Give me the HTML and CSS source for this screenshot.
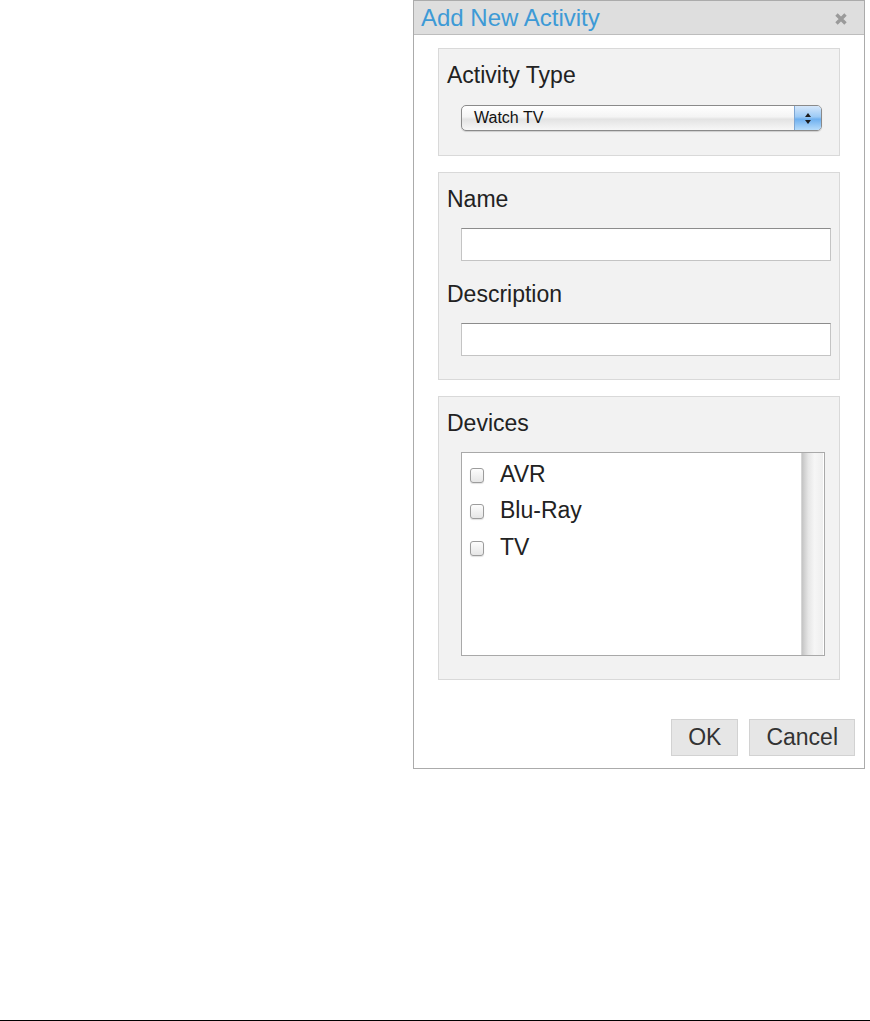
FILE: index.html
```html
<!DOCTYPE html>
<html lang="en">
<head>
    <meta charset="UTF-8">
    <meta name="viewport" content="width=device-width, initial-scale=1.0">
    <title>Add New Activity</title>
    <link rel="stylesheet" href="styles.css">
</head>
<body>
    <div class="dialog" role="dialog" aria-labelledby="dialog-title">
        <div class="dialog__titlebar">
            <span class="dialog__title" id="dialog-title">Add New Activity</span>
            <button class="dialog__close" aria-label="Close">
                <svg width="12" height="12" viewBox="0 0 12 12">
                    <path d="M1.5 1.5 L10.5 10.5 M10.5 1.5 L1.5 10.5" stroke="#9a9a9a" stroke-width="3.4" stroke-linecap="butt"/>
                </svg>
            </button>
        </div>

        <div class="dialog__body">
            <div class="group">
                <label class="group__label">Activity Type</label>
                <div class="select" role="combobox" aria-label="Activity Type">
                    <span class="select__value">Watch TV</span>
                    <span class="select__stepper">
                        <span class="arrow arrow--up"></span>
                        <span class="arrow arrow--down"></span>
                    </span>
                </div>
            </div>

            <div class="group">
                <label class="group__label" for="name">Name</label>
                <input class="field" id="name" type="text">
                <label class="group__label group__label--spaced" for="description">Description</label>
                <input class="field" id="description" type="text">
            </div>

            <div class="group">
                <label class="group__label">Devices</label>
                <div class="listbox">
                    <ul class="listbox__items">
                        <li><label class="device"><input class="check" type="checkbox"> AVR</label></li>
                        <li><label class="device"><input class="check" type="checkbox"> Blu-Ray</label></li>
                        <li><label class="device"><input class="check" type="checkbox"> TV</label></li>
                    </ul>
                    <div class="listbox__scroll"></div>
                </div>
            </div>
        </div>

        <div class="dialog__actions">
            <button class="btn">OK</button>
            <button class="btn">Cancel</button>
        </div>
    </div>
</body>
</html>
```

FILE: styles.css
```css
/* Reset */
* {
    margin: 0;
    padding: 0;
    box-sizing: border-box;
}
html {
    height: 100%;
}
body {
    min-height: 100vh;
    background-color: #fff;
    border-bottom: 1px solid #000;
    font-family: "Liberation Sans", Arial, sans-serif;
    color: #222;
}

/* Dialog */
.dialog {
    width: 452px;
    margin-left: 413px;
    border: 1px solid #ababab;
    background-color: #fff;
}
.dialog__titlebar {
    display: flex;
    align-items: center;
    justify-content: space-between;
    height: 34px;
    padding: 0 17px 0 7px;
    background-color: #dedede;
    border-bottom: 1px solid #bdbdbd;
}
.dialog__title {
    font-size: 24px;
    line-height: 34px;
    color: #3d9ad6;
}
.dialog__close {
    display: flex;
    border: none;
    background: none;
    cursor: pointer;
    margin-top: 2px;
}
.dialog__body {
    display: flex;
    flex-direction: column;
    gap: 16px;
    padding: 13px 24px 0 24px;
}

/* Fieldset-like groups */
.group {
    display: flex;
    flex-direction: column;
    align-items: flex-start;
    padding: 12px 0 23px 8px;
    background-color: #f2f2f2;
    border: 1px solid #d9d9d9;
}
.group__label {
    font-size: 23px;
    line-height: 28px;
    color: #222;
}
.group__label--spaced {
    margin-top: 19px;
}

/* Mac style popup */
.select {
    display: flex;
    align-items: stretch;
    width: 361px;
    height: 26px;
    margin: 16px 0 1px 14px;
    border: 1px solid #8a8a8a;
    border-radius: 5px;
    background: linear-gradient(#ffffff, #f4f4f4 45%, #e3e3e3 55%, #f7f7f7);
    box-shadow: 0 1px 1px rgba(0, 0, 0, 0.15);
    overflow: hidden;
}
.select__value {
    flex: 1;
    padding-left: 12px;
    font-size: 16px;
    line-height: 24px;
    color: #111;
}
.select__stepper {
    display: flex;
    flex-direction: column;
    align-items: center;
    justify-content: center;
    gap: 3px;
    width: 27px;
    border-left: 1px solid #7ea6d2;
    background: linear-gradient(#d5e7fb, #9ccaf5 45%, #6fb0ef 55%, #b6dcfb);
}
.arrow {
    width: 0;
    height: 0;
    border-left: 3px solid transparent;
    border-right: 3px solid transparent;
}
.arrow--up {
    border-bottom: 4px solid #1d1d1d;
}
.arrow--down {
    border-top: 4px solid #1d1d1d;
}

/* Text inputs */
.field {
    width: 370px;
    height: 33px;
    margin: 15px 0 0 14px;
    border: 1px solid #c4c4c4;
    border-top-color: #8c8c8c;
    background-color: #fff;
    font-family: inherit;
    font-size: 18px;
    padding: 0 6px;
}

/* Device list */
.listbox {
    display: flex;
    width: 364px;
    height: 204px;
    margin: 15px 0 0 14px;
    border: 1px solid #a9a9a9;
    background-color: #fff;
}
.listbox__items {
    flex: 1;
    list-style: none;
    padding-top: 3px;
}
.device {
    display: flex;
    align-items: center;
    gap: 16px;
    height: 36.5px;
    padding-left: 8px;
    font-size: 23px;
    color: #222;
}
.check {
    appearance: none;
    -webkit-appearance: none;
    width: 14px;
    height: 15px;
    border: 1px solid #9c9c9c;
    border-radius: 3px;
    background: linear-gradient(#fdfdfd, #e6e6e6);
    box-shadow: 0 1px 1px rgba(0, 0, 0, 0.12);
    margin-top: 2px;
}
.listbox__scroll {
    width: 22px;
    margin-right: 1px;
    border-left: 1px solid #d6d6d6;
    background: linear-gradient(90deg, #c4c4c4, #e6e6e6 30%, #f6f6f6 60%, #eeeeee);
}

/* Buttons */
.dialog__actions {
    display: flex;
    justify-content: flex-end;
    gap: 11px;
    padding: 39px 9px 12px 0;
}
.btn {
    height: 37px;
    padding: 0 16px;
    border: 1px solid #d2d2d2;
    background-color: #e6e6e6;
    font-family: inherit;
    font-size: 23px;
    color: #333;
    cursor: pointer;
}
.btn:hover {
    background-color: #dcdcdc;
}
```
